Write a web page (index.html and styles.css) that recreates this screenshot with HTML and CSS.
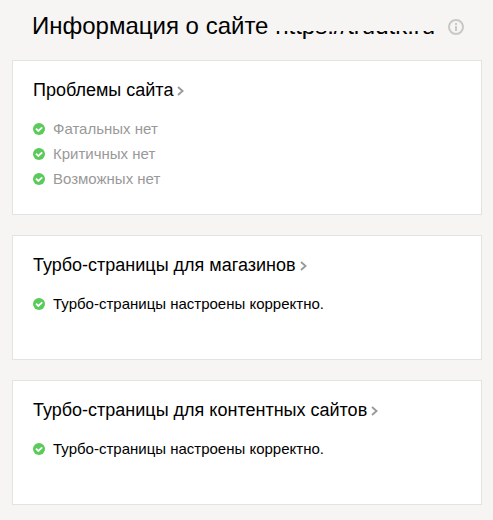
FILE: index.html
```html
<!DOCTYPE html>
<html lang="ru">
<head>
    <meta charset="UTF-8">
    <meta name="viewport" content="width=device-width, initial-scale=1.0">
    <title>Информация о сайте</title>
    <link rel="stylesheet" href="styles.css">
</head>
<body>

    <header class="page-header">
        <h1>Информация о сайте <span class="site-url">https://trudtk.ru</span></h1>
        <svg class="info-icon" width="16" height="16" viewBox="0 0 16 16">
            <circle cx="8" cy="8" r="7" />
            <path d="M8 4v2M8 7v5" />
        </svg>
    </header>

    <main>
        <section class="card card-problems">
            <h2>Проблемы сайта<svg class="arrow" width="8" height="10" viewBox="0 0 8 10"><path d="M1 1L5.6 5L1 9" /></svg></h2>
            <ul class="status-list muted">
                <li><svg class="check" width="12" height="12" viewBox="0 0 12 12"><circle cx="6" cy="6" r="6" /><path d="M3 5.7L5.3 8L9.2 4.4" /></svg>Фатальных нет</li>
                <li><svg class="check" width="12" height="12" viewBox="0 0 12 12"><circle cx="6" cy="6" r="6" /><path d="M3 5.7L5.3 8L9.2 4.4" /></svg>Критичных нет</li>
                <li><svg class="check" width="12" height="12" viewBox="0 0 12 12"><circle cx="6" cy="6" r="6" /><path d="M3 5.7L5.3 8L9.2 4.4" /></svg>Возможных нет</li>
            </ul>
        </section>

        <section class="card">
            <h2>Турбо-страницы для магазинов<svg class="arrow" width="8" height="10" viewBox="0 0 8 10"><path d="M1 1L5.6 5L1 9" /></svg></h2>
            <ul class="status-list">
                <li><svg class="check" width="12" height="12" viewBox="0 0 12 12"><circle cx="6" cy="6" r="6" /><path d="M3 5.7L5.3 8L9.2 4.4" /></svg>Турбо-страницы настроены корректно.</li>
            </ul>
        </section>

        <section class="card">
            <h2>Турбо-страницы для контентных сайтов<svg class="arrow" width="8" height="10" viewBox="0 0 8 10"><path d="M1 1L5.6 5L1 9" /></svg></h2>
            <ul class="status-list">
                <li><svg class="check" width="12" height="12" viewBox="0 0 12 12"><circle cx="6" cy="6" r="6" /><path d="M3 5.7L5.3 8L9.2 4.4" /></svg>Турбо-страницы настроены корректно.</li>
            </ul>
        </section>
    </main>

</body>
</html>
```
FILE: styles.css
```css
* {
    box-sizing: border-box;
}
body {
    font-family: "Liberation Sans", Arial, sans-serif;
    margin: 0;
    padding: 0 11px 0 12px;
    background-color: #f6f5f3;
    color: #000;
}
.page-header {
    display: flex;
    align-items: flex-start;
    height: 60px;
    padding: 12px 0 0 20px;
}
h1 {
    margin: 0;
    font-size: 24px;
    font-weight: normal;
    line-height: 28px;
    white-space: nowrap;
}
/* only the lower part of the address is shown */
.site-url {
    display: inline-block;
    vertical-align: top;
    clip-path: inset(19px 0 0 0);
}
.info-icon {
    margin: 7px 0 0 13px;
    fill: none;
    stroke: #c8c8c7;
    stroke-width: 2;
}
.card {
    height: 125px;
    margin-bottom: 20px;
    padding: 18px 20px;
    background-color: #fff;
    border: 1px solid #e4e3df;
}
.card-problems {
    height: 155px;
}
h2 {
    display: flex;
    align-items: center;
    margin: 0 0 15px;
    font-size: 18px;
    font-weight: normal;
    line-height: 22px;
}
.arrow {
    margin: 2px 0 0 4px;
    fill: none;
    stroke: #999;
    stroke-width: 1.8;
}
.status-list {
    margin: 0;
    padding: 0;
    list-style: none;
    font-size: 15px;
    line-height: 25px;
}
.status-list li {
    display: flex;
    align-items: center;
}
.muted {
    color: #999;
}
.check {
    margin-right: 8px;
    fill: #5acb5a;
}
.check path {
    fill: none;
    stroke: #fff;
    stroke-width: 1.8;
}
```
